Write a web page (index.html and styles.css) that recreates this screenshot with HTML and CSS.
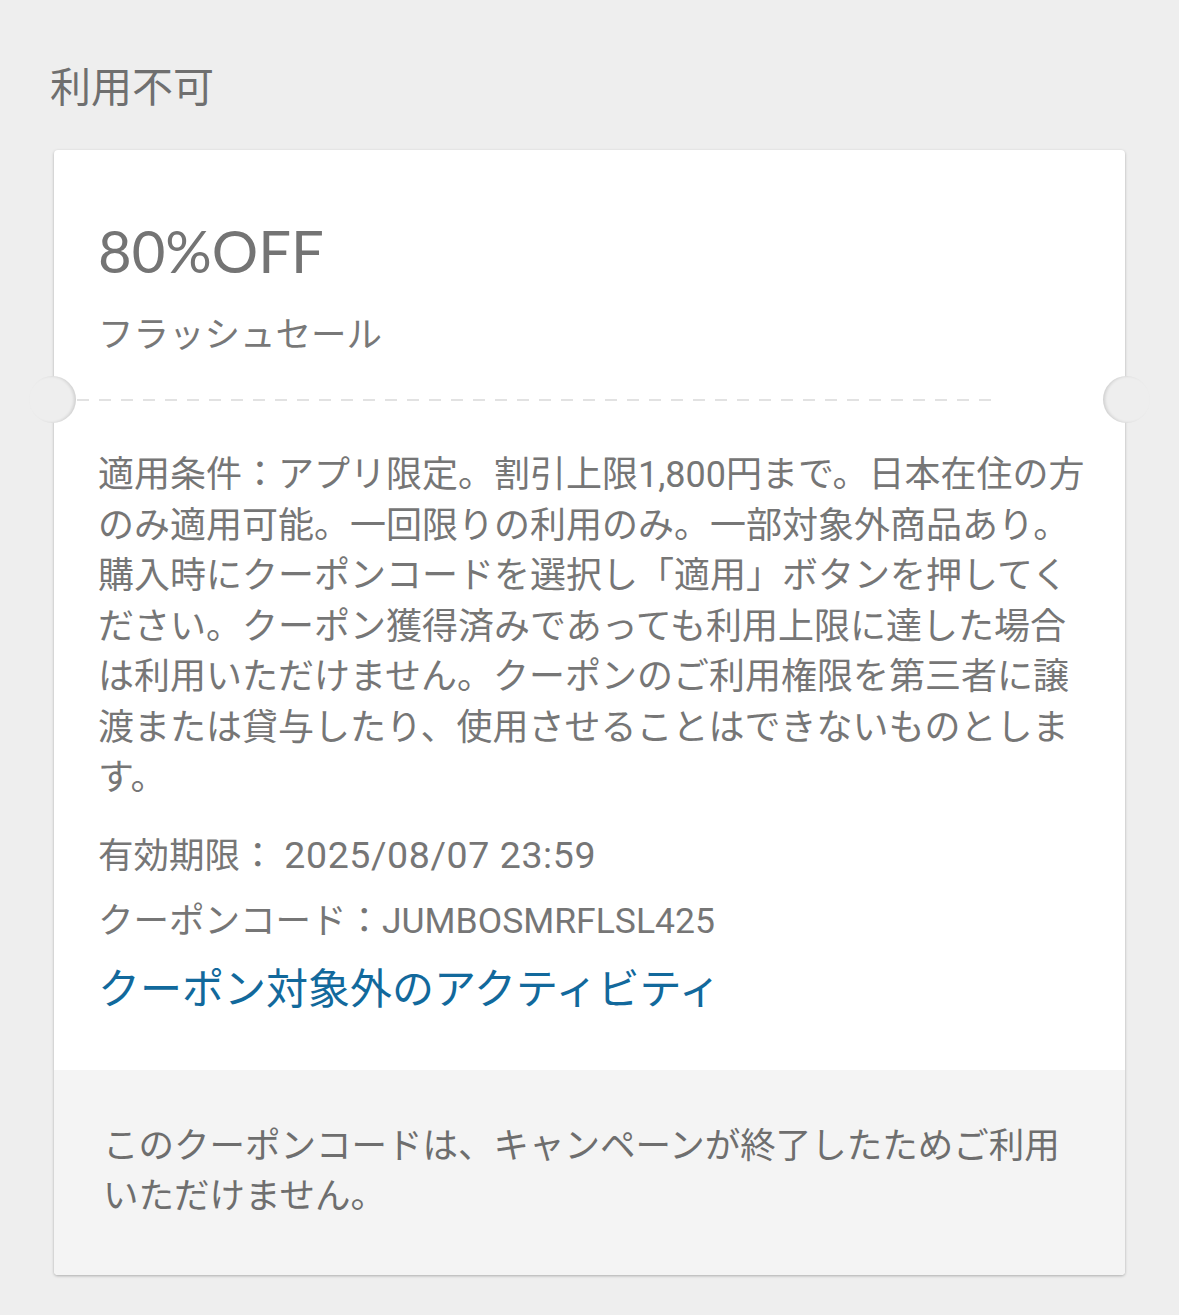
FILE: index.html
```html
<!DOCTYPE html>
<html lang="ja">
<head>
<meta charset="utf-8">
<title>利用不可</title>
<link rel="stylesheet" href="styles.css">
</head>
<body>
<div class="page">
  <h2 class="section-title">利用不可</h2>
  <div class="coupon">
    <div class="coupon-top">
      <div class="discount">80%OFF</div>
      <div class="coupon-name">フラッシュセール</div>
    </div>
    <div class="divider">
      <span class="notch notch-left"></span>
      <span class="dash"></span>
      <span class="notch notch-right"></span>
    </div>
    <div class="coupon-body">
      <p class="terms">適用条件：アプリ限定。割引上限1,800円まで。日本在住の方のみ適用可能。一回限りの利用のみ。一部対象外商品あり。購入時にクーポンコードを選択し「適用」ボタンを押してください。クーポン獲得済みであっても利用上限に達した場合は利用いただけません。クーポンのご利用権限を第三者に譲渡または貸与したり、使用させることはできないものとします。</p>
      <p class="meta meta-expiry">有効期限： <span class="date">2025/08/07 23:59</span></p>
      <p class="meta meta-code">クーポンコード：JUMBOSMRFLSL425</p>
      <a class="link" href="#">クーポン対象外のアクティビティ</a>
    </div>
    <div class="coupon-footer">
      <p class="notice">このクーポンコードは、キャンペーンが終了したためご利用いただけません。</p>
    </div>
  </div>
</div>
</body>
</html>
```

FILE: styles.css
```css
html, body {
  margin: 0;
  padding: 0;
  background: #eeeeee;
}
body {
  font-family: Roboto, "Noto Sans CJK JP", sans-serif;
  color: #767676;
}
.page {
  padding: 60px 54px 40px 50px;
}
.section-title {
  margin: 0;
  font-weight: 400;
  font-size: 41px;
  line-height: 56px;
  color: #6f6f6f;
}
.coupon {
  position: relative;
  margin: 34px 0 0 4px;
  background: #ffffff;
  border-radius: 4px;
  box-shadow: 0 1px 3px rgba(0, 0, 0, 0.28);
}
.coupon-top {
  padding: 72px 44px 39px 44px;
}
.discount {
  font-family: Lato, Roboto, sans-serif;
  font-size: 58px;
  line-height: 58px;
  color: #747474;
}
.coupon-name {
  margin-top: 30px;
  font-size: 35.5px;
  line-height: 50px;
  color: #787878;
}
.divider {
  position: relative;
  height: 2px;
}
.dash {
  display: block;
  height: 2px;
  margin: 0 132px 0 23px;
  background: repeating-linear-gradient(90deg, #e2e2e2 0 12px, transparent 12px 22px);
}
.notch {
  position: absolute;
  top: -23px;
  width: 47px;
  height: 47px;
  border-radius: 50%;
  background: #eeeeee;
}
.notch-left {
  left: -25px;
  box-shadow: inset -2px 0 3px rgba(0, 0, 0, 0.12);
}
.notch-right {
  right: -25px;
  box-shadow: inset 2px 0 3px rgba(0, 0, 0, 0.12);
}
.coupon-body {
  padding: 49px 36px 52px 44px;
}
.terms {
  margin: 0;
  font-size: 36px;
  line-height: 50.5px;
}
.meta {
  margin: 0;
  font-size: 35.5px;
  line-height: 50px;
}
.date {
  font-size: 37.5px;
  letter-spacing: 0.6px;
}
.meta-expiry {
  margin-top: 26px;
}
.meta-code {
  margin-top: 15px;
}
.link {
  display: block;
  margin-top: 16px;
  font-size: 42px;
  line-height: 56px;
  color: #12699c;
  text-decoration: none;
}
.coupon-footer {
  background: #f4f4f4;
  padding: 51px 51px 54px 49px;
  border-radius: 0 0 4px 4px;
}
.notice {
  margin: 0;
  font-size: 35.5px;
  line-height: 50px;
  color: #6e6e6e;
}
```
